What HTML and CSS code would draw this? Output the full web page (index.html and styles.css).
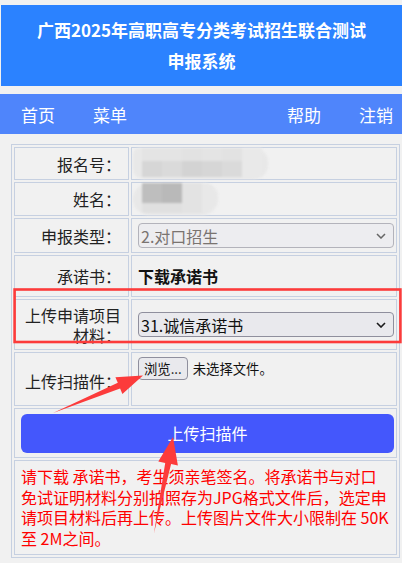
FILE: index.html
```html
<!DOCTYPE html>
<html lang="zh-CN">
<head>
    <meta charset="UTF-8">
    <meta name="viewport" content="width=device-width, initial-scale=1.0">
    <title>申报系统</title>
    <link rel="stylesheet" href="styles.css">
</head>
<body>
    <div class="header">
        <h1>广西2025年高职高专分类考试招生联合测试申报系统</h1>
    </div>
    <div class="nav">
        <div class="nav-left">
            <a href="#">首页</a>
            <a href="#">菜单</a>
        </div>
        <div class="nav-right">
            <a href="#">帮助</a>
            <a href="#">注销</a>
        </div>
    </div>

    <table class="form">
        <tr class="r1">
            <td class="label">报名号：</td>
            <td class="value">
                <div class="mosaic m1">
                    <span class="px c1"></span><span class="px c1"></span><span class="px c2"></span><span class="px c1"></span><span class="px c2"></span><span class="px c3"></span>
                    <span class="px c4"></span><span class="px c5"></span><span class="px c6"></span><span class="px c4"></span><span class="px c5"></span><span class="px c3"></span>
                </div>
            </td>
        </tr>
        <tr class="r2">
            <td class="label">姓名：</td>
            <td class="value">
                <div class="mosaic m2">
                    <span class="px d1"></span><span class="px d2"></span><span class="px d3"></span>
                    <span class="px d4"></span><span class="px d4"></span><span class="px d3"></span>
                </div>
            </td>
        </tr>
        <tr class="r3">
            <td class="label">申报类型：</td>
            <td class="value">
                <div class="select">
                    <select disabled>
                        <option>2.对口招生</option>
                    </select>
                    <svg class="chev" width="10" height="6" viewBox="0 0 10 6"><path d="M1 1l4 4 4-4" fill="none" stroke="#666" stroke-width="1.5"/></svg>
                </div>
            </td>
        </tr>
        <tr class="r4">
            <td class="label">承诺书：</td>
            <td class="value"><a class="download" href="#">下载承诺书</a></td>
        </tr>
        <tr class="r5">
            <td class="label">上传申请项目材料：</td>
            <td class="value">
                <div class="select">
                    <select>
                        <option>31.诚信承诺书</option>
                    </select>
                    <svg class="chev" width="10" height="6" viewBox="0 0 10 6"><path d="M1 1l4 4 4-4" fill="none" stroke="#1a1a1a" stroke-width="1.6"/></svg>
                </div>
            </td>
        </tr>
        <tr class="r6">
            <td class="label scan-label">上传扫描件：</td>
            <td class="value top">
                <div class="file">
                    <button class="browse" type="button">浏览...</button>
                    <span class="file-name">未选择文件。</span>
                </div>
            </td>
        </tr>
        <tr class="r7">
            <td class="submit-cell" colspan="2">
                <button class="submit" type="button">上传扫描件</button>
            </td>
        </tr>
        <tr class="r8">
            <td class="notice" colspan="2">请下载 承诺书，考生须亲笔签名。将承诺书与对口免试证明材料分别拍照存为JPG格式文件后，选定申请项目材料后再上传。上传图片文件大小限制在 50K至 2M之间。</td>
        </tr>
    </table>

    <!-- screenshot annotations -->
    <svg class="marks" width="402" height="563" viewBox="0 0 402 563">
        <rect x="14.6" y="289.5" width="385.8" height="52.5" fill="none" stroke="#fc3b3b" stroke-width="2.6"/>
        <polygon points="53,413 117.8,382.8 115.4,377.3 143,375.5 122.4,393.9 120.1,388.4" fill="#fc3b3b"/>
        <polygon points="154,533 165.2,462.9 158.3,461.6 173,437 177.9,465.4 171.1,464.1" fill="#fc3b3b"/>
    </svg>
</body>
</html>
```

FILE: styles.css
```css
body
{
    margin: 0;
    background: #f1f1f1;
    font-family: "Noto Sans CJK SC", "Liberation Sans", sans-serif;
    position: relative;
    color: #222;
}

.header
{
    margin: 5px 0 0 1px;
    padding: 9px 30px 10px;
    background: #2b82ff;
}

.header h1
{
    margin: 0;
    font-size: 17px;
    line-height: 31px;
    font-weight: bold;
    color: #fff;
    text-align: center;
}

.nav
{
    margin-top: 8px;
    height: 40px;
    background: #4f85fb;
    display: flex;
    justify-content: space-between;
    align-items: center;
}

.nav a
{
    color: #fff;
    font-size: 17px;
    text-decoration: none;
}

.nav-left
{
    display: flex;
    gap: 38px;
    padding-left: 21px;
}

.nav-right
{
    display: flex;
    gap: 38px;
    padding-right: 9px;
}

.form
{
    margin: 10px 0 0 11px;
    width: 389px;
    border: 1px solid #c6d0e1;
    border-spacing: 2px;
}

.form td
{
    border: 1px solid #c6d0e1;
    font-size: 16px;
    padding: 0;
}

.r1 { height: 31px; }
.r2 { height: 31px; }
.r3 { height: 35px; }
.r4 { height: 42px; }
.r5 { height: 51px; }
.r6 { height: 54px; }
.r7 { height: 50px; }
.r8 { height: 93px; }

.form td.label
{
    width: 104px;
    padding: 0 7px 0 2px;
    text-align: right;
    line-height: 20px;
}

.form td.scan-label
{
    padding-top: 4px;
}

.form td.value
{
    padding: 0 2px 0 6px;
}

.form td.top
{
    vertical-align: top;
    padding-top: 4px;
}

/* blurred personal data */
.mosaic
{
    margin-left: -5px;
    display: grid;
    background: #e8e8e8;
    filter: blur(0.8px);
}

.m1
{
    width: 126px;
    height: 31px;
    padding-left: 9px;
    border-radius: 6px 14px 14px 10px;
    grid-template-columns: repeat(6, 20px);
    grid-template-rows: 13px 16px;
}

.m2
{
    width: 76px;
    height: 32px;
    padding-left: 9px;
    border-radius: 16px 14px 16px 16px;
    grid-template-columns: repeat(3, 20px);
    grid-template-rows: 20px 10px;
}

.c1 { background: #e4e4e4; }
.c2 { background: #e2e2e2; }
.c3 { background: #e9e9e9; }
.c4 { background: #d6d6d6; }
.c5 { background: #dadada; }
.c6 { background: #d3d3d3; }
.d1 { background: #bebebe; }
.d2 { background: #b9b9b9; }
.d3 { background: #e3e3e3; }
.d4 { background: #e0e0e0; }

.select
{
    position: relative;
}

.select select
{
    -webkit-appearance: none;
    appearance: none;
    display: block;
    width: 100%;
    height: 25px;
    padding: 0 20px 0 2px;
    border: 1px solid #8f8f9d;
    border-radius: 4px;
    background: #e9e9ed;
    color: #111;
    font-family: inherit;
    font-size: 16px;
}

.select select:disabled
{
    background: #ededf0;
    border-color: #b3b3bb;
    color: #7a7470;
    opacity: 1;
}

.chev
{
    position: absolute;
    right: 8px;
    top: 10px;
}

.download
{
    color: #111;
    font-weight: bold;
    text-decoration: none;
}

.file
{
    display: flex;
    align-items: center;
    gap: 5px;
    font-size: 13.33px;
}

.browse
{
    height: 23px;
    padding: 0 5px;
    border: 1px solid #8f8f9d;
    border-radius: 4px;
    background: #e9e9ed;
    color: #111;
    font-family: inherit;
    font-size: 13.33px;
}

.file-name
{
    color: #111;
}

.form td.submit-cell
{
    padding: 0 2px 0 6px;
}

.submit
{
    display: block;
    width: 100%;
    height: 39px;
    border: none;
    border-radius: 6px;
    background: #4457fc;
    color: #fff;
    font-family: inherit;
    font-size: 16px;
}

.form td.notice
{
    vertical-align: top;
    padding: 5px 6px;
    color: #ff0000;
    line-height: 20.7px;
}

.marks
{
    position: absolute;
    top: 0;
    left: 0;
    pointer-events: none;
}
```
